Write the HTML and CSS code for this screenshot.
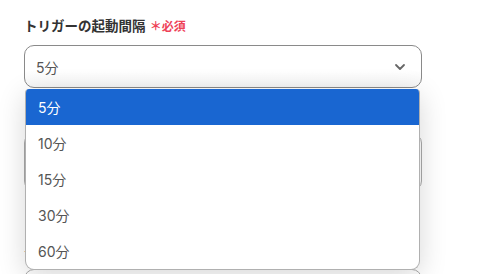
FILE: index.html
```html
<!DOCTYPE html>
<html lang="ja">
<head>
    <meta charset="UTF-8">
    <title>トリガーの起動間隔</title>
    <link rel="stylesheet" href="styles.css">
</head>
<body>
    <div class="form">
        <div class="field">
            <div class="label">トリガーの起動間隔 <span class="required">＊必須</span></div>
            <div class="select">
                <span class="value">5分</span>
                <svg class="chevron" width="12" height="8" viewBox="0 0 12 8">
                    <path d="M2 2 L6 6 L10 2" fill="none" stroke="#666" stroke-width="1.8" stroke-linecap="round" stroke-linejoin="round"/>
                </svg>
            </div>

            <ul class="menu">
                <li class="selected">5分</li>
                <li>10分</li>
                <li>15分</li>
                <li>30分</li>
                <li>60分</li>
            </ul>
        </div>

        <div class="field field-hidden">
            <div class="box"></div>
            <div class="note">-</div>
            <div class="box box-next"></div>
        </div>
    </div>
</body>
</html>
```

FILE: styles.css
```css
body {
    margin: 0;
    font-family: Inter, "Noto Sans CJK JP", sans-serif;
    background: #fff;
    color: #444;
    overflow: hidden;
}

.form {
    padding: 16px 24px 0;
    width: 398px;
}

.field {
    position: relative;
}

.label {
    font-size: 13.5px;
    font-weight: 700;
    line-height: 20px;
    color: #333;
    margin-bottom: 8px;
}

.required {
    color: #ee4257;
    font-size: 12px;
    font-weight: 700;
    margin-left: 1px;
}

.select {
    height: 41px;
    border: 1px solid #8a8a8a;
    border-radius: 10px;
    padding: 0 15px 0 11px;
    display: flex;
    align-items: center;
    justify-content: space-between;
    background: linear-gradient(180deg, #fff 60%, #f6f6f6 100%);
}

.value {
    font-size: 14px;
    color: #555;
}

.menu {
    position: absolute;
    top: 73px;
    left: 1px;
    width: 393px;
    margin: 0;
    padding: 0;
    list-style: none;
    background: #fff;
    border: 1px solid #b0b0b0;
    border-top: none;
    border-radius: 4px 4px 9px 9px;
    box-shadow: 0 6px 28px rgba(0, 0, 0, 0.16);
    overflow: hidden;
    z-index: 2;
}

.menu li {
    height: 36px;
    line-height: 37px;
    padding-left: 12px;
    font-size: 14px;
    color: #555;
}

.menu li.selected {
    background: #1966d1;
    color: #fff;
}

.field-hidden {
    margin-top: 45px;
}

.box {
    height: 56px;
    border: 1px solid #aaa;
    border-radius: 10px;
}

.note {
    margin-top: 52px;
    font-size: 13px;
    line-height: 16px;
    color: #333;
}

.box-next {
    margin-top: 10px;
    height: 40px;
}
```
